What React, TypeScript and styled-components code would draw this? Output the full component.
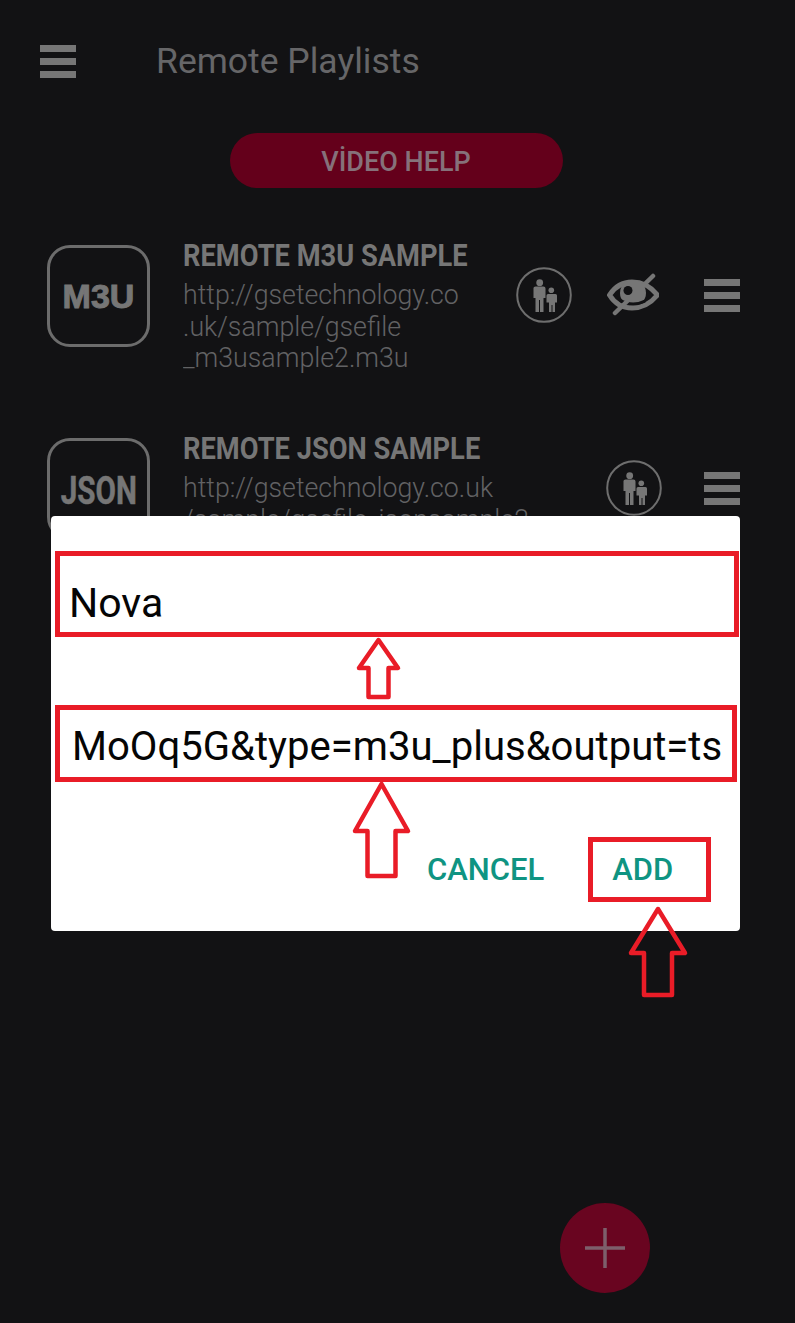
import React from "react"
import styled, { createGlobalStyle } from "styled-components"

const GlobalStyle = createGlobalStyle`
  html, body {
    margin: 0;
    padding: 0;
    background: #121214;
    font-family: "Roboto", "Liberation Sans", sans-serif;
  }
`

const RED = "#e91c27"
const MUTED = "#767676"

const Screen = styled.div`
  position: relative;
  width: 795px;
  height: 1323px;
  overflow: hidden;
  background: #121214;
`

const Header = styled.header`
  display: flex;
  align-items: center;
  height: 32px;
  padding: 45px 0 0 40px;
`

const Title = styled.h1`
  margin: 0 0 0 80px;
  font-size: 35.500px;
  font-weight: 400;
  color: #666668;
  white-space: nowrap;
`

const HelpRow = styled.div`
  display: flex;
  justify-content: center;
  padding: 56px 3px 0 0;
`

const HelpButton = styled.button`
  width: 333px;
  height: 55px;
  border: 0;
  border-radius: 28px;
  background: #64001b;
  color: #86717a;
  font-family: inherit;
  font-size: 27px;
  font-weight: 500;
  padding: 2px 0 0 0;
`

const List = styled.ul`
  list-style: none;
  margin: 0;
  padding: 48px 0 0 47px;
`

const Row = styled.li`
  display: flex;
  height: 193px;
`

const Logo = styled.div`
  display: flex;
  align-items: center;
  justify-content: center;
  box-sizing: border-box;
  flex: none;
  width: 103px;
  height: 102px;
  margin-top: 9px;
  border: 3px solid #6c6c6c;
  border-radius: 23px;
`

const LogoText = styled.span<{ $wide?: boolean }>`
  display: inline-block;
  padding-top: ${({ $wide }) => ($wide ? 0 : 3)}px;
  color: ${MUTED};
  font-family: ${({ $wide }) => ($wide ? '"Liberation Sans"' : '"Roboto"')}, sans-serif;
  font-size: ${({ $wide }) => ($wide ? 34 : 38)}px;
  font-weight: 700;
  transform: scaleX(${({ $wide }) => ($wide ? 1 : 0.78)});
  -webkit-text-stroke: ${({ $wide }) => ($wide ? "1px" : "0.500px")} ${MUTED};
`

const Info = styled.div`
  flex: none;
  width: 323px;
  margin-left: 33px;
`

const Name = styled.div`
  height: 36px;
  margin-top: 2px;
  font-size: 31px;
  line-height: 36px;
  font-weight: 700;
  color: ${MUTED};
  white-space: nowrap;
  transform: scaleX(0.88);
  transform-origin: left center;
`

const Url = styled.div`
  margin-top: 5px;
  font-size: 28px;
  line-height: 31.500px;
  font-weight: 300;
  color: #626264;
  white-space: nowrap;
  transform: scaleX(0.955);
  transform-origin: left center;
`

const Actions = styled.div`
  display: flex;
  align-items: center;
  flex: 1;
  justify-content: flex-end;
  height: 60px;
  margin-top: 29px;
  padding-right: 55px;
  gap: 42px;
`

const IconWrap = styled.span`
  display: flex;
  flex: none;
  & + & {
    margin-left: -7px;
    margin-right: 3px;
  }
`

const Burger = styled.span`
  display: flex;
  flex-direction: column;
  justify-content: space-between;
  flex: none;
  width: 36px;
  height: 33px;
  i {
    display: block;
    height: 7px;
    background: ${MUTED};
  }
`

const Dialog = styled.div`
  position: absolute;
  left: 51px;
  top: 516px;
  box-sizing: border-box;
  width: 689px;
  height: 415px;
  padding-top: 35px;
  background: #fff;
  border-radius: 4px;
`

const Field = styled.div<{ $height: number; $pad: number; $bottom: number; $size: number; $width: number; $gap: number }>`
  display: flex;
  align-items: flex-end;
  box-sizing: border-box;
  width: ${({ $width }) => $width}px;
  height: ${({ $height }) => $height}px;
  margin: ${({ $gap }) => $gap}px 0 0 4px;
  padding: 0 0 ${({ $bottom }) => $bottom}px ${({ $pad }) => $pad}px;
  border: 5px solid ${RED};
  color: #050505;
  font-size: ${({ $size }) => $size}px;
  white-space: nowrap;
`

const Buttons = styled.div`
  display: flex;
  align-items: center;
  margin: 55px 0 0 376px;
`

const TextButton = styled.span`
  color: #0f9482;
  font-size: 31px;
  font-weight: 500;
`

const AddBox = styled.div`
  display: flex;
  align-items: center;
  box-sizing: border-box;
  width: 123px;
  height: 65px;
  margin-left: 44px;
  padding-left: 19px;
  border: 5px solid ${RED};
`

const Fab = styled.button`
  position: absolute;
  left: 560px;
  top: 1203px;
  display: flex;
  align-items: center;
  justify-content: center;
  width: 90px;
  height: 90px;
  padding: 0;
  border: 0;
  border-radius: 50%;
  background: #690520;
`

const Arrow = styled.svg<{ $left: number; $top: number }>`
  position: absolute;
  left: ${({ $left }) => $left}px;
  top: ${({ $top }) => $top}px;
  overflow: visible;
`

const BurgerIcon = () => (
  <Burger>
    <i />
    <i />
    <i />
  </Burger>
)

const FamilyIcon = () => (
  <IconWrap>
    <svg width="56" height="56" viewBox="0 0 56 56">
      <circle cx="28" cy="28" r="26.800" fill="none" stroke="#6e6e6e" strokeWidth="2" />
      <g fill="#767676">
        <circle cx="23.700" cy="15.700" r="3.400" />
        <path d="M17.500 21Q17.500 19.500 19.500 19.500H27.500Q29.500 19.500 29.500 21.500V31H27.500V45H24V33H23V45H19.500V31H17.500Z" />
        <circle cx="35.300" cy="23.300" r="2.800" />
        <path d="M30.500 28.500Q30.500 27 32 27H39.500Q41 27 41 28.500V35.500H39V45H36.500V38H35.500V45H33V35.500H30.500Z" />
      </g>
    </svg>
  </IconWrap>
)

const EyeOffIcon = () => (
  <IconWrap>
    <svg width="52" height="44" viewBox="8 5 52 44">
      <path
        d="M10.500 27C17 17 26 14 33 14C43 14 52 19 58.500 27C52 35 43 40 33 40C24 40 16 36 10.500 27Z"
        fill="none"
        stroke="#767676"
        strokeWidth="5"
        strokeLinejoin="round"
      />
      <circle cx="34" cy="25" r="13" fill="#767676" />
      <circle cx="29" cy="22.500" r="4.500" fill="#121214" />
      <path d="M21 32Q33 39.500 46 33" fill="none" stroke="#121214" strokeWidth="3" />
      <path d="M16 45L54 8" stroke="#767676" strokeWidth="4.500" strokeLinecap="round" />
    </svg>
  </IconWrap>
)

const UpArrow = ({ left, top, w, h, shaft, head }: { left: number; top: number; w: number; h: number; shaft: number; head: number }) => {
  const a = (w - shaft) / 2
  return (
    <Arrow $left={left} $top={top} width={w} height={h} viewBox={`0 0 ${w} ${h}`}>
      <path
        d={`M${w / 2} 0 L${w} ${head} H${a + shaft} V${h} H${a} V${head} H0 Z`}
        fill="none"
        stroke={RED}
        strokeWidth="4.500"
        strokeLinejoin="round"
      />
    </Arrow>
  )
}

export default function App() {
  return (
    <Screen>
      <GlobalStyle />
      <Header>
        <BurgerIcon />
        <Title>Remote Playlists</Title>
      </Header>
      <HelpRow>
        <HelpButton>VİDEO HELP</HelpButton>
      </HelpRow>
      <List>
        <Row>
          <Logo>
            <LogoText $wide>M3U</LogoText>
          </Logo>
          <Info>
            <Name>REMOTE M3U SAMPLE</Name>
            <Url>
              http://gsetechnology.co
              <br />
              .uk/sample/gsefile
              <br />
              _m3usample2.m3u
            </Url>
          </Info>
          <Actions>
            <FamilyIcon />
            <EyeOffIcon />
            <BurgerIcon />
          </Actions>
        </Row>
        <Row>
          <Logo>
            <LogoText>JSON</LogoText>
          </Logo>
          <Info>
            <Name>REMOTE JSON SAMPLE</Name>
            <Url>
              http://gsetechnology.co.uk
              <br />
              /sample/gsefile_jsonsample2
            </Url>
          </Info>
          <Actions>
            <FamilyIcon />
            <BurgerIcon />
          </Actions>
        </Row>
      </List>

      <Dialog>
        <Field $height={86} $pad={9} $bottom={5} $size={41} $width={684} $gap={0}>Nova</Field>
        <Field $height={77} $pad={12} $bottom={7} $size={40.1} $width={682} $gap={68}>MoOq5G&amp;type=m3u_plus&amp;output=ts</Field>
        <Buttons>
          <TextButton>CANCEL</TextButton>
          <AddBox>
            <TextButton>ADD</TextButton>
          </AddBox>
        </Buttons>
      </Dialog>

      <UpArrow left={359} top={640} w={39} h={57} shaft={20} head={28} />
      <UpArrow left={355} top={784} w={53} h={92} shaft={28} head={47} />
      <UpArrow left={631} top={909} w={54} h={86} shaft={28} head={44} />

      <Fab aria-label="add">
        <svg width="40" height="40" viewBox="0 0 40 40">
          <path d="M20 0v40M0 20h40" stroke="#7d5f6b" strokeWidth="3.500" />
        </svg>
      </Fab>
    </Screen>
  )
}
